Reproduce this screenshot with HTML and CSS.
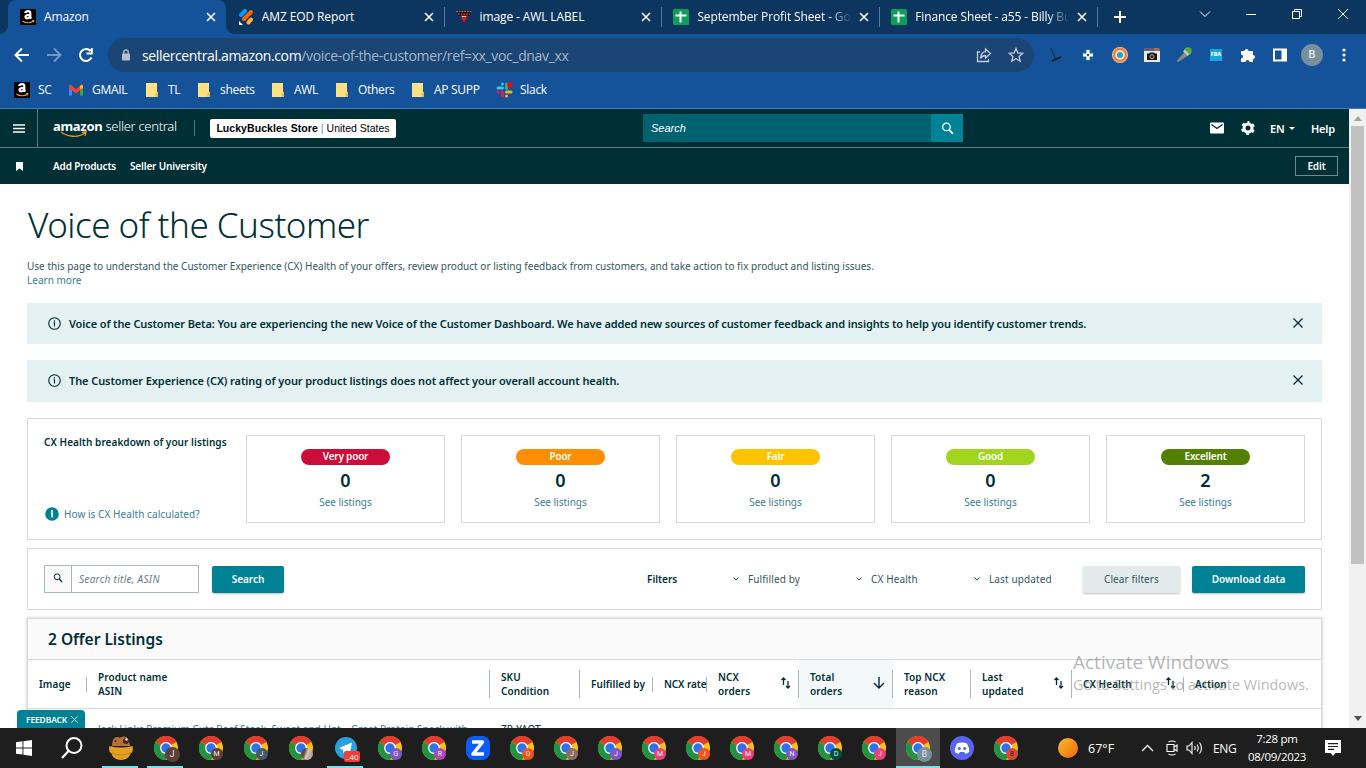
FILE: index.html
```html
<!DOCTYPE html>
<html lang="en">
<head>
  <meta charset="UTF-8" />
  <meta name="viewport" content="width=device-width, initial-scale=1" />
  <title>Voice of the Customer</title>
  <link rel="stylesheet" href="styles.css">
</head>
<body>
  <!-- Shared icons -->
  <svg class="defs" width="0" height="0">
    <symbol id="chrome" viewBox="0 0 24 24">
      <circle cx="12" cy="12" r="12" fill="#fbc116" />
      <path d="M12 12 1.6 6A12 12 0 0 1 22.4 6z" fill="#e33b2e" />
      <path d="M12 6h10.4A12 12 0 0 0 12 0z" fill="#e33b2e" />
      <path d="M1.6 6A12 12 0 0 0 12 24l5.2-9L12 12z" fill="#229342" />
      <circle cx="12" cy="12" r="6" fill="#fff" />
      <circle cx="12" cy="12" r="4.7" fill="#2d74ea" />
    </symbol>
    <symbol id="amazon" viewBox="0 0 16 16">
      <rect width="16" height="16" fill="#000" />
      <path d="M5.200 4C5.500 2.600 6.600 2.200 8 2.200s2.300.7 2.300 2v4.300l.9 1.200M10.200 5.900C7.500 5.900 5.500 6.300 5.500 8.100s3.300 1.800 4.500-.3" fill="none" stroke="#fff" stroke-width="2.200" />
      <path d="M2.500 12c3 2.300 8 2.300 10.500.3M12 11.700l1.800-.1-.4 1.700" fill="none" stroke="#f39b21" stroke-width="1.100" />
    </symbol>
    <symbol id="sheet" viewBox="0 0 16 16">
      <rect width="16" height="16" rx="1.500" fill="#0f9d58" />
      <path d="M2.500 6.500h11M7.500 2.500v11" stroke="#fff" stroke-width="2" />
    </symbol>
    <symbol id="x" viewBox="0 0 10 10">
      <path d="M1 1l8 8M9 1l-8 8" fill="none" stroke="currentColor" stroke-width="1.600" />
    </symbol>
    <symbol id="x-thin" viewBox="0 0 10 10">
      <path d="M.5.5l9 9M9.500.5l-9 9" fill="none" stroke="currentColor" stroke-width="1.300" />
    </symbol>
    <symbol id="folder" viewBox="0 0 12 14">
      <path d="M0 0h11v9h1v5H0z" fill="#ffe082" />
      <path d="M9.500 14V10.500L12 9v5z" fill="#e8bf4a" />
    </symbol>
    <symbol id="lens" viewBox="0 0 12 12">
      <circle cx="5" cy="4.500" r="3.500" fill="none" stroke="currentColor" stroke-width="1.200" />
      <path d="M7.500 7.200l3.500 3.800" stroke="currentColor" stroke-width="1.600" />
    </symbol>
    <symbol id="info" viewBox="0 0 14 14">
      <circle cx="7" cy="7" r="6.200" fill="none" stroke="currentColor" stroke-width="1.200" />
      <path d="M7 3.500v1.500M6 6.300h1v4" fill="none" stroke="currentColor" stroke-width="1.200" />
    </symbol>
    <symbol id="sort" viewBox="0 0 10 12">
      <path d="M2.500 8V1M.5 3l2-2 2 2M7 4v7M5 9l2 2 2-2" fill="none" stroke="currentColor" stroke-width="1.300" />
    </symbol>
    <symbol id="chevron" viewBox="0 0 6 4">
      <path d="M.5.5L3 3 5.500.5" fill="none" stroke="currentColor" stroke-width="1" />
    </symbol>
  </svg>

  <!-- Browser tabs -->
  <div class="tabs">
    <div class="tab active"><svg class="fav"><use href="#amazon" /></svg><span>Amazon</span><svg class="close"><use href="#x" /></svg></div>
    <div class="tab">
      <svg class="fav" viewBox="0 0 16 16">
        <g stroke-width="4" stroke-linecap="round"><path d="M3 6l4-4" stroke="#0099ff" /><path d="M6 10l7-7" stroke="#ff6100" /><path d="M10.500 13.500l2.500-3" stroke="#ffb629" /></g>
        <path d="M1 12l4 4H1z" fill="#fff" />
      </svg><span>AMZ EOD Report</span><svg class="close"><use href="#x" /></svg>
    </div>
    <div class="tab line">
      <svg class="fav" viewBox="0 0 16 16">
        <path d="M1 2h14l-1.500 5h-11z" fill="#1b1015" /><path d="M0 2.500h16M2 5h12" stroke="#b8604a" stroke-dasharray="2 .7" /><path d="M4 6.500h8l-4 7.500z" fill="#f40b0b" /><path d="M6 7.500h4" stroke="#fff" />
      </svg><span>image - AWL LABEL</span><svg class="close"><use href="#x" /></svg>
    </div>
    <div class="tab line"><svg class="fav"><use href="#sheet" /></svg><span class="fade">September Profit Sheet - Google</span><svg class="close"><use href="#x" /></svg></div>
    <div class="tab line"><svg class="fav"><use href="#sheet" /></svg><span class="fade">Finance Sheet - a55 - Billy Buckles</span><svg class="close"><use href="#x" /></svg></div>
    <div class="new-tab"><svg width="12" height="12" viewBox="0 0 12 12"><path d="M6 0v12M0 6h12" stroke="#fff" stroke-width="2" /></svg></div>
    <div class="window-controls">
      <svg viewBox="0 0 12 12"><path d="M1 3.500l5 5 5-5" /></svg>
      <svg viewBox="0 0 12 12"><path d="M1 6.500h10" /></svg>
      <svg viewBox="0 0 12 12"><path d="M1.500 3.500h7v7h-7zM3.500 3.500v-2h7v7h-2" /></svg>
      <svg viewBox="0 0 12 12"><path d="M1 1l10 10M11 1L1 11" /></svg>
    </div>
  </div>

  <!-- Toolbar -->
  <div class="toolbar">
    <div class="nav-buttons">
      <svg viewBox="0 0 16 16"><path d="M15 8H2M8 1.500L1.500 8 8 14.500" /></svg>
      <svg class="dim" viewBox="0 0 16 16"><path d="M1 8h13M8 1.500L14.500 8 8 14.500" /></svg>
      <svg viewBox="0 0 16 16"><path d="M13.500 10.500A6 6 0 1 1 12.500 4M13.800 1v5.500H8.500" /></svg>
    </div>
    <div class="omnibox">
      <svg width="10" height="12" viewBox="0 0 10 12"><rect x="1" y="4.500" width="8" height="7" rx="1" fill="#b9c0c9" /><path d="M2.800 5V3a2.200 2.200 0 0 1 4.400 0v2" fill="none" stroke="#b9c0c9" stroke-width="1.300" /></svg>
      <span class="url">sellercentral.amazon.com<i>/voice-of-the-customer/ref=xx_voc_dnav_xx</i></span>
      <svg class="omni-icon" viewBox="0 0 16 16"><path d="M4 5H1.500v9.500h11V12M9.500 2l5 4.500-5 4.500V8.500C7 8.500 5.500 9.500 4.500 11.500 4.800 7.500 6.500 5 9.500 4.700z" /></svg>
      <svg class="omni-icon" viewBox="0 0 16 16"><path d="M8 1.500l1.900 4.400 4.800.4-3.600 3.200 1.100 4.700L8 11.700l-4.200 2.500 1.100-4.700L1.300 6.300l4.800-.4z" /></svg>
    </div>
    <div class="extensions">
      <svg viewBox="0 0 16 16"><path d="M3 1l5 12" fill="none" stroke="#10243c" /><path d="M4 14l9-4" fill="none" stroke="#0a1422" stroke-width="1.800" /></svg>
      <svg viewBox="0 0 16 16"><circle cx="8" cy="8" r="6.500" fill="#17648f" /><path d="M8 3v10M3 8h10" stroke="#fff" stroke-width="3.200" /><circle cx="8" cy="8" r="1.300" fill="#17648f" /></svg>
      <svg viewBox="0 0 16 16"><circle cx="8" cy="8" r="8" fill="#f8cba5" /><circle cx="8" cy="8" r="6" fill="none" stroke="#f0803c" stroke-width="2.500" /><circle cx="8" cy="8" r="4.700" fill="#f8dcc4" /><circle cx="8" cy="8" r="3" fill="#1ba1dc" /></svg>
      <svg viewBox="0 0 16 16"><path d="M0 1h16v14H0z" fill="#e9e9ea" /><path d="M0 1h16v3H0z" fill="#5b5f78" /><path d="M10 1h5v3h-5z" fill="#b36a5b" /><path d="M3 6.500h2l1-1h4l1 1h2V13H3z" fill="#161616" /><circle cx="8" cy="9.700" r="2" fill="none" stroke="#bbb" /></svg>
      <svg viewBox="0 0 16 16"><path d="M1.500 14.500L9 6l2 2z" fill="#999" stroke="#888" stroke-width="2" /><circle cx="12" cy="4" r="3.800" fill="#4faf35" /><path d="M8 3.500l4.500 4.500" stroke="#c4c4c4" stroke-width="2.500" /></svg>
      <span class="fba">FBA</span>
      <svg viewBox="0 0 16 16"><path d="M1 4h3.500a2 2 0 1 1 4 0H13v4a2 2 0 1 1 0 4v3H9.500a2 2 0 0 0-4 0H1v-3.500a2 2 0 0 0 0-4z" fill="#fff" /></svg>
      <svg viewBox="0 0 16 16"><path d="M2 2.500h12v11H2z" fill="none" stroke="#fff" stroke-width="2" /><path d="M9.500 2h5v12h-5z" fill="#fff" /></svg>
      <span class="avatar">B</span>
      <svg viewBox="0 0 16 16"><g fill="#fff"><circle cx="8" cy="3" r="1.600" /><circle cx="8" cy="8" r="1.600" /><circle cx="8" cy="13" r="1.600" /></g></svg>
    </div>
  </div>

  <!-- Bookmarks -->
  <div class="bookmarks">
    <div class="bookmark"><svg width="16" height="16"><use href="#amazon" /></svg>SC</div>
    <div class="bookmark"><svg width="16" height="12" viewBox="0 0 16 12"><path d="M1 1.500v10h3V5z" fill="#4285f4" /><path d="M15 1.500v10h-3V5z" fill="#34a853" /><path d="M1 1.500v3L8 9.500l7-5v-3L13.500.5 8 5 2.500.5z" fill="#ea4335" /><path d="M12 2v3.500l3-1.500V1.500L13.500.5z" fill="#fbbc04" /></svg>GMAIL</div>
    <div class="bookmark"><svg width="12" height="14"><use href="#folder" /></svg>TL</div>
    <div class="bookmark"><svg width="12" height="14"><use href="#folder" /></svg>sheets</div>
    <div class="bookmark"><svg width="12" height="14"><use href="#folder" /></svg>AWL</div>
    <div class="bookmark"><svg width="12" height="14"><use href="#folder" /></svg>Others</div>
    <div class="bookmark"><svg width="12" height="14"><use href="#folder" /></svg>AP SUPP</div>
    <div class="bookmark">
      <svg width="17" height="16" viewBox="0 0 17 16"><g stroke-width="3" stroke-linecap="round"><path d="M6.500 2v.1M2 6h4.500" stroke="#36c5f0" /><path d="M10.500 2v4.500" stroke="#2eb67d" /><path d="M10.500 10H15M10.500 14v.1" stroke="#ecb22e" /><path d="M2 10h.1M6.500 10v4" stroke="#e01e5a" /></g><circle cx="14" cy="3" r="2.800" fill="#f00" /></svg>Slack
    </div>
  </div>

  <div class="viewport">
    <div class="page">
      <header>
        <div class="top-bar">
          <div class="burger"><svg width="12" height="9" viewBox="0 0 12 9"><path d="M0 1h12M0 4.500h12M0 8h12" stroke="#fff" stroke-width="1.300" /></svg></div>
          <div class="logo">
            <b>amazon</b> <span>seller central</span>
            <svg class="smile" width="28" height="7" viewBox="0 0 28 7"><path d="M1 1c7 5 17 6 24 1M22 1.500l4-.7-.8 4" fill="none" stroke="#f39b21" stroke-width="1.300" /></svg>
          </div>
          <div class="store"><b>LuckyBuckles Store</b><em>|</em><span>United States</span></div>
          <div class="site-search"><span>Search</span><div><svg width="13" height="13"><use href="#lens" /></svg></div></div>
          <div class="top-links">
            <svg width="14" height="12" viewBox="0 0 14 12"><rect y=".5" width="14" height="11" rx="1" fill="#fff" /><path d="M1.500 2.500L7 6.500l5.500-4" fill="none" stroke="#002f36" stroke-width="1.400" /></svg>
            <svg class="gear" width="14" height="14" viewBox="0 0 14 14"><circle cx="7" cy="7" r="4" fill="none" stroke="#fff" stroke-width="3" /><circle cx="7" cy="7" r="5.800" fill="none" stroke="#fff" stroke-width="2.200" stroke-dasharray="3.040 3.040" stroke-dashoffset="1.520" transform="rotate(-90 7 7)" /></svg>
            <span class="lang">EN</span>
            <svg class="caret" width="6" height="3" viewBox="0 0 6 3"><path d="M0 0h6L3 3z" fill="#fff" /></svg>
            <span class="help">Help</span>
          </div>
        </div>
        <div class="sub-bar">
          <svg width="7" height="9" viewBox="0 0 7 9"><path d="M0 0h7v9L3.500 6.500 0 9z" fill="#fff" /></svg>
          <span class="add">Add Products</span>
          <span class="uni">Seller University</span>
          <span class="edit">Edit</span>
        </div>
      </header>

      <main>
        <h1>Voice of the Customer</h1>
        <p class="intro"><span>Use this page to understand the Customer Experience (CX) Health of your offers, review product or listing feedback from customers, and take action to fix product and listing issues.</span><br /><a>Learn more</a></p>

        <div class="notice"><svg class="i"><use href="#info" /></svg><span>Voice of the Customer Beta: You are experiencing the new Voice of the Customer Dashboard. We have added new sources of customer feedback and insights to help you identify customer trends.</span><svg class="dismiss"><use href="#x-thin" /></svg></div>
        <div class="notice second"><svg class="i"><use href="#info" /></svg><span>The Customer Experience (CX) rating of your product listings does not affect your overall account health.</span><svg class="dismiss"><use href="#x-thin" /></svg></div>

        <section class="health">
          <div class="health-side">
            <h2>CX Health breakdown of your listings</h2>
            <a><svg width="14" height="14" viewBox="0 0 14 14"><circle cx="7" cy="7" r="6.800" fill="#008296" /><path d="M7 3v2M6 6.200h1.200v4.300" fill="none" stroke="#fff" stroke-width="1.700" /></svg><span>How is CX Health calculated?</span></a>
          </div>
          <div class="score"><span class="pill very-poor">Very poor</span><strong>0</strong><a>See listings</a></div>
          <div class="score"><span class="pill poor">Poor</span><strong>0</strong><a>See listings</a></div>
          <div class="score"><span class="pill fair">Fair</span><strong>0</strong><a>See listings</a></div>
          <div class="score"><span class="pill good">Good</span><strong>0</strong><a>See listings</a></div>
          <div class="score"><span class="pill excellent">Excellent</span><strong>2</strong><a>See listings</a></div>
        </section>

        <section class="filters">
          <div class="field"><div><svg width="10" height="10"><use href="#lens" /></svg></div><span>Search title, ASIN</span></div>
          <div class="btn primary search-btn">Search</div>
          <b class="filters-label">Filters</b>
          <div class="filter f1"><svg><use href="#chevron" /></svg>Fulfilled by</div>
          <div class="filter f2"><svg><use href="#chevron" /></svg>CX Health</div>
          <div class="filter f3"><svg><use href="#chevron" /></svg>Last updated</div>
          <div class="btn clear">Clear filters</div>
          <div class="btn primary download">Download data</div>
        </section>

        <section class="listings">
          <h3>2 Offer Listings</h3>
          <div class="row head">
            <div class="short">Image</div>
            <div>Product name<br />ASIN</div>
            <div>SKU<br />Condition</div>
            <div class="short">Fulfilled by</div>
            <div class="short rate">NCX rate</div>
            <div>NCX<br />orders<svg class="sort"><use href="#sort" /></svg></div>
            <div class="sorted">Total<br />orders<svg class="sort down" viewBox="0 0 12 12"><path d="M6 0v11M1 6l5 5 5-5" fill="none" stroke="currentColor" stroke-width="1.400" /></svg></div>
            <div>Top NCX<br />reason</div>
            <div>Last<br />updated<svg class="sort"><use href="#sort" /></svg></div>
            <div class="short">CX Health<svg class="sort"><use href="#sort" /></svg></div>
            <div>Action</div>
          </div>
          <div class="row item">
            <div></div>
            <div><a>Jack Links Premium Cuts Beef Steak, Sweet and Hot – Great Protein Snack with</a></div>
            <div>ZP-YAOT</div>
          </div>
        </section>
      </main>
      <div class="feedback">FEEDBACK<svg width="7" height="7"><use href="#x-thin" /></svg></div>
    </div>
    <div class="scrollbar">
      <svg width="8" height="5" viewBox="0 0 8 5"><path d="M0 5h8L4 0z" fill="#a3a3a3" /></svg>
      <div class="thumb"></div>
      <svg width="8" height="5" viewBox="0 0 8 5"><path d="M0 0h8L4 5z" fill="#505050" /></svg>
    </div>
    <div class="watermark"><p class="w1">Activate Windows</p><p class="w2">Go to Settings to activate Windows.</p></div>
  </div>

  <!-- Taskbar -->
  <div class="taskbar">
    <div class="task start"><svg width="16" height="16" viewBox="0 0 16 16"><path d="M0 2.200l6.500-.9v6.200H0zM7.400 1.200L16 0v7.500H7.400zM0 8.400h6.500v6.200L0 13.700zM7.400 8.400H16V16l-8.600-1.200z" fill="#fff" /></svg></div>
    <div class="task find"><svg width="22" height="22" viewBox="0 0 22 22"><circle cx="13" cy="8.500" r="7.500" fill="none" stroke="#fff" stroke-width="2" /><path d="M7.500 14L1 21" stroke="#fff" stroke-width="2.200" /></svg></div>
    <div class="task wide open"><svg width="24" height="24" viewBox="0 0 24 24"><path d="M3 10Q3 1 8 1q3 1 6-.5Q20-.5 21 10z" fill="#b5713a" /><circle cx="17" cy="5" r="3" fill="#43261e" /><circle cx="17.500" cy="3.500" r="1.200" fill="#fff" /><circle cx="6.500" cy="5" r="1" fill="#43261e" /><path d="M.5 10q11.500 3 23 0 1.500 6-2 7.500Q20 24 12 24t-9.500-6.500Q-1 16 .5 10z" fill="#e5a023" /><path d="M2.500 17q9.500 4 19 0" fill="none" stroke="#c98218" /></svg></div>
    <div class="task wide open"><svg width="24" height="24"><use href="#chrome" /></svg><i class="badge brown big">J</i></div>
    <div class="task wide"><svg width="24" height="24"><use href="#chrome" /></svg><i class="badge brown">M</i></div>
    <div class="task wide"><svg width="24" height="24"><use href="#chrome" /></svg><i class="badge slate">J</i></div>
    <div class="task wide"><svg width="24" height="24"><use href="#chrome" /></svg><i class="badge photo"></i></div>
    <div class="task wide open"><svg width="22" height="22" viewBox="0 0 22 22"><circle cx="11" cy="11" r="11" fill="#2ca0dc" /><path d="M4 11l13-5.500-2.500 12-4-3-2 2-.5-3.500z" fill="#fff" /></svg><i class="count">..40</i></div>
    <div class="task"><svg width="24" height="24"><use href="#chrome" /></svg><i class="badge violet">G</i></div>
    <div class="task"><svg width="24" height="24"><use href="#chrome" /></svg><i class="badge purple">R</i></div>
    <div class="task"><svg width="24" height="24" viewBox="0 0 24 24"><rect width="24" height="24" rx="8" fill="#0b5cff" /><path d="M6 6h10.500L7 18h11" fill="none" stroke="#fff" stroke-width="3.600" stroke-linejoin="round" /></svg></div>
    <div class="task"><svg width="24" height="24"><use href="#chrome" /></svg><i class="badge orange">D</i></div>
    <div class="task"><svg width="24" height="24"><use href="#chrome" /></svg><i class="badge taupe">J</i></div>
    <div class="task"><svg width="24" height="24"><use href="#chrome" /></svg><i class="badge violet">J</i></div>
    <div class="task"><svg width="24" height="24"><use href="#chrome" /></svg><i class="badge pink">M</i></div>
    <div class="task"><svg width="24" height="24"><use href="#chrome" /></svg><i class="badge orange">J</i></div>
    <div class="task"><svg width="24" height="24"><use href="#chrome" /></svg><i class="badge pink">M</i></div>
    <div class="task"><svg width="24" height="24"><use href="#chrome" /></svg><i class="badge violet">N</i></div>
    <div class="task"><svg width="24" height="24"><use href="#chrome" /></svg><i class="badge green">D</i></div>
    <div class="task"><svg width="24" height="24"><use href="#chrome" /></svg><i class="badge pink">J</i></div>
    <div class="task current"><svg width="24" height="24"><use href="#chrome" /></svg><i class="badge gray big">B</i></div>
    <div class="task"><svg width="24" height="24" viewBox="0 0 24 24"><circle cx="12" cy="12" r="12" fill="#5865f2" /><path d="M7 7.500q5-2 10 0 2.500 4 2.200 8.500-2 1.500-4 1.700l-1-1.700h-4.400l-1 1.700q-2-.2-4-1.700Q4.500 11.500 7 7.500z" fill="#fff" /><circle cx="9.300" cy="12.500" r="1.600" fill="#5865f2" /><circle cx="14.700" cy="12.500" r="1.600" fill="#5865f2" /></svg></div>
    <div class="task"><svg width="24" height="24"><use href="#chrome" /></svg><i class="badge red">8</i></div>
    <div class="tray">
      <i class="sun"></i>
      <span class="temp">67°F</span>
      <svg width="13" height="8" viewBox="0 0 13 8"><path d="M1 7l5.500-5.500L12 7" fill="none" stroke="#fff" stroke-width="1.300" /></svg>
      <svg class="meet" width="12" height="16" viewBox="0 0 12 16"><path d="M1 4.500h7v7H1zM8 7l3-2v6L8 9M2.500 2q3.500-2 7 0M2.500 14q3.500 2 7 0" fill="none" stroke="#fff" stroke-width="1.100" /></svg>
      <svg class="volume" width="17" height="14" viewBox="0 0 17 14"><path d="M1 5h2l3-3.500v11L3 9H1zM8.500 5q1.500 2 0 4M11 3.500q2.500 3.500 0 7M13.500 1.500q4 5.500 0 11" fill="none" stroke="#fff" stroke-width="1.100" /></svg>
      <span class="eng">ENG</span>
      <span class="clock">7:28 pm<br />08/09/2023</span>
      <svg class="note" width="16" height="16" viewBox="0 0 16 16"><path d="M0 0h16v13h-5.500L8 16l-2.500-3H0z" fill="#fff" /><path d="M3 3.700h10M3 6.500h10M3 9.300h6" stroke="#1e1e1e" stroke-width="1.200" /></svg>
    </div>
  </div>
</body>
</html>
```
FILE: styles.css
```css
* {
  margin: 0;
  padding: 0;
  box-sizing: border-box;
}
body {
  width: 1366px;
  height: 768px;
  overflow: hidden;
  display: flex;
  flex-direction: column;
  background: #fff;
  color: #002f36;
  font-family: "Noto Sans", "Open Sans", sans-serif;
  font-size: 10px;
}
svg {
  display: block;
  flex: none;
}
i {
  font-style: normal;
}
.defs {
  position: absolute;
}

/* browser chrome */
.tabs {
  height: 34px;
  flex: none;
  display: flex;
  padding-left: 8px;
  background: #0c3560;
  color: #fff;
  font-family: "Open Sans", sans-serif;
  font-size: 12px;
}
.tab {
  width: 217.8px;
  display: flex;
  align-items: center;
  padding: 0 10px 0 12px;
  white-space: nowrap;
  letter-spacing: -0.12px;
}
.tab.active {
  position: relative;
  background: #14529a;
  border-radius: 8px 8px 0 0;
}
.tab.active::before,
.tab.active::after {
  content: "";
  position: absolute;
  bottom: 0;
  width: 8px;
  height: 8px;
  background: radial-gradient(circle at 0 0, transparent 7.5px, #14529a 8px);
}
.tab.active::before { left: -8px; }
.tab.active::after {
  right: -8px;
  transform: scaleX(-1);
}
.tab.line {
  background: linear-gradient(#55799d, #55799d) 0 7px / 1px 20px no-repeat;
}
.tab .fav {
  width: 16px;
  height: 16px;
  margin-right: 8px;
}
.tab span {
  width: 155px;
  overflow: hidden;
  padding-bottom: 1px;
}
.fade {
  -webkit-mask-image: linear-gradient(90deg, #000 85%, transparent);
  mask-image: linear-gradient(90deg, #000 85%, transparent);
}
.close {
  width: 10px;
  height: 10px;
  margin-left: 7px;
}
.new-tab {
  width: 46px;
  display: flex;
  align-items: center;
  justify-content: center;
  background: linear-gradient(#55799d, #55799d) 0 7px / 1px 20px no-repeat;
}
.window-controls {
  display: flex;
  margin-left: auto;
}
.window-controls svg {
  width: 12px;
  height: 12px;
  margin: 8px 17px;
  fill: none;
  stroke: #fff;
}
.toolbar {
  height: 42px;
  flex: none;
  display: flex;
  align-items: center;
  background: #14529a;
}
.nav-buttons {
  display: flex;
  gap: 16px;
  width: 108px;
  padding-left: 14px;
}
.nav-buttons svg {
  width: 16px;
  height: 16px;
  fill: none;
  stroke: #fff;
  stroke-width: 2;
}
.nav-buttons .dim {
  stroke: #7397c3;
}
.omnibox {
  width: 926px;
  height: 34px;
  display: flex;
  align-items: center;
  padding: 0 10px 0 13px;
  border-radius: 17px;
  background: #1a4575;
  color: #fff;
}
.url {
  flex: 1;
  margin-left: 11px;
  font: 14px "Open Sans", sans-serif;
  letter-spacing: -0.36px;
}
.url i {
  color: #a5b5c8;
}
.omni-icon {
  width: 16px;
  height: 16px;
  margin-left: 16px;
  fill: none;
  stroke: #c3ccd7;
  stroke-width: 1.3;
}
.extensions {
  display: flex;
  align-items: center;
  margin-left: 14px;
  gap: 16px;
}
.extensions svg {
  width: 16px;
  height: 16px;
}
.fba {
  width: 12px;
  height: 12px;
  margin: 0 2px;
  background: #16a5dd;
  color: #fff;
  font-size: 5.5px;
  font-weight: 800;
  line-height: 11px;
  text-align: center;
}
.avatar {
  width: 22px;
  height: 22px;
  margin: 0 -3px;
  border-radius: 50%;
  background: #78909c;
  color: #fff;
  font: 11px/22px Roboto, sans-serif;
  text-align: center;
}
.bookmarks {
  height: 33px;
  flex: none;
  display: flex;
  align-items: center;
  padding: 0 0 5px 14px;
  background: #14529a;
  border-bottom: 1px solid #4379b8;
  color: #fff;
  font-family: "Open Sans", sans-serif;
  font-size: 12px;
  letter-spacing: -0.3px;
}
.bookmark {
  width: 54px;
  display: flex;
  align-items: center;
  gap: 8px;
  white-space: nowrap;
}
.bookmark:nth-child(n+3) { gap: 10px; }
.bookmark:nth-child(2) { width: 78px; }
.bookmark:nth-child(3) { width: 52px; }
.bookmark:nth-child(4) { width: 74px; }
.bookmark:nth-child(5) { width: 64px; }
.bookmark:nth-child(6) { width: 76px; }
.bookmark:nth-child(7) { width: 84px; }
.bookmark:nth-child(8) { gap: 7px; }

/* page */
.viewport {
  position: relative;
  height: 619px;
  flex: none;
  display: flex;
  overflow: hidden;
}
.page {
  position: relative;
  width: 1349px;
  height: 619px;
  overflow: hidden;
}
header {
  background: #002f36;
  color: #fff;
}
.top-bar {
  height: 39px;
  display: flex;
  align-items: center;
  border-bottom: 1px solid #5f7b7f;
}
.burger {
  width: 38px;
  height: 38px;
  display: flex;
  align-items: center;
  padding-left: 13px;
  border-right: 1px solid #5f7b7f;
}
.logo {
  position: relative;
  width: 142px;
  height: 16px;
  margin: 0 15px;
  border-right: 1px solid #5f7b7f;
  font-size: 13px;
  line-height: 13px;
  white-space: nowrap;
  letter-spacing: -0.3px;
}
.logo span {
  font-weight: 300;
}
.smile {
  position: absolute;
  left: 7px;
  top: 11px;
}
.store {
  width: 186px;
  height: 19px;
  display: flex;
  align-items: center;
  justify-content: center;
  border-radius: 2px;
  background: #fff;
  color: #000;
  font-family: "Liberation Sans", Arial, sans-serif;
  font-size: 10.5px;
  white-space: nowrap;
}
.store b {
  letter-spacing: 0.06px;
}
.store em {
  margin: 0 3px;
  color: #5da0d0;
  font-style: normal;
}
.site-search {
  width: 320px;
  height: 28px;
  display: flex;
  align-items: center;
  margin-left: 247px;
  padding-left: 8px;
  background: #00626f;
  font: italic 11px "Liberation Sans", sans-serif;
}
.site-search div {
  width: 32px;
  height: 28px;
  margin-left: auto;
  padding: 8px 10px;
  background: #008296;
}
.top-links {
  display: flex;
  align-items: center;
  margin-left: 247px;
  font-size: 11px;
  font-weight: 600;
  letter-spacing: -0.2px;
}
.gear {
  margin-left: 17px;
}
.lang {
  width: 16px;
  margin-left: 15px;
}
.caret {
  margin-left: 3px;
}
.help {
  margin-left: 16px;
}
.sub-bar {
  height: 36px;
  display: flex;
  align-items: center;
  padding: 0 11px 0 16px;
  font-weight: 600;
  letter-spacing: -0.15px;
}
.add {
  width: 77px;
  margin-left: 30px;
  white-space: nowrap;
}
.edit {
  width: 43px;
  height: 20px;
  margin-left: auto;
  border: 1px solid #708a8d;
  line-height: 19px;
  text-align: center;
}
main {
  padding: 0 27px;
}
h1 {
  height: 75px;
  padding: 16px 0 0 1px;
  font-size: 35px;
  font-weight: 300;
  line-height: 50px;
  white-space: nowrap;
  letter-spacing: -0.5px;
}
.intro {
  height: 44px;
  line-height: 14px;
  white-space: nowrap;
  color: #33565c;
  letter-spacing: 0.01px;
}
a {
  color: #3a7d96;
}
.notice {
  height: 41px;
  display: flex;
  align-items: center;
  margin-bottom: 16px;
  padding: 0 19px 1px 21px;
  background: #e3f1f2;
  font-size: 11px;
  font-weight: 600;
  white-space: nowrap;
  letter-spacing: -0.12px;
}
.notice.second {
  height: 42px;
  padding-bottom: 2px;
  letter-spacing: -0.09px;
}
.i {
  width: 13px;
  height: 13px;
  margin-right: 8px;
}
.dismiss {
  width: 10px;
  height: 10px;
  margin-left: auto;
}
.health {
  height: 122px;
  display: flex;
  gap: 16px;
  padding: 16px;
  border: 1px solid #d5dbdb;
}
.health-side {
  width: 186px;
  height: 88px;
  display: flex;
  flex-direction: column;
  justify-content: space-between;
  padding-bottom: 2px;
  white-space: nowrap;
  letter-spacing: 0.06px;
}
.health-side h2 {
  font-size: 10px;
  font-weight: 600;
}
.health-side a {
  display: flex;
  align-items: center;
  gap: 5px;
  padding-left: 1px;
}
.score {
  width: 199px;
  height: 88px;
  display: flex;
  flex-direction: column;
  align-items: center;
  padding-top: 13px;
  border: 1px solid #d5dbdb;
}
.pill {
  width: 89px;
  height: 16px;
  border-radius: 8px;
  color: #fff;
  font-weight: 600;
  line-height: 15px;
  text-align: center;
  letter-spacing: -0.2px;
}
.very-poor { background: #cc0c39; }
.poor { background: #ff8f00; }
.fair { background: #ffc400; }
.good { background: #a2d61e; }
.excellent { background: #538000; }
.score strong {
  margin-top: 2px;
  font-size: 18px;
  font-weight: 600;
  line-height: 26px;
}
.score a {
  margin-top: 2px;
  line-height: 14px;
}
.filters {
  height: 62px;
  display: flex;
  align-items: center;
  margin-top: 8px;
  padding-left: 16px;
  border: 1px solid #d5dbdb;
  white-space: nowrap;
}
.field {
  width: 155px;
  height: 28px;
  display: flex;
  align-items: center;
  border: 1px solid #aab7b8;
  color: #6a7c80;
  font-style: italic;
  letter-spacing: 0.3px;
}
.field div {
  width: 27px;
  height: 26px;
  margin-right: 7px;
  padding: 7px 8px;
  border-right: 1px solid #aab7b8;
  background: #fafafa;
  color: #002f36;
}
.btn {
  height: 27px;
  line-height: 27px;
  border-radius: 2px;
  text-align: center;
  box-shadow: 0 1px 2px rgba(0, 0, 0, 0.25);
}
.primary {
  background: #008296;
  color: #fff;
  font-weight: 600;
}
.search-btn {
  width: 72px;
  margin-left: 13px;
}
.filters-label {
  width: 86px;
  margin-left: 363px;
  padding-bottom: 1px;
  font-weight: 600;
}
.filter {
  display: flex;
  align-items: center;
  gap: 9px;
  color: #33565c;
  letter-spacing: 0.12px;
}
.filter svg {
  width: 6px;
  height: 4px;
}
.f1 { width: 123px; }
.f2 { width: 118px; }
.f3 { width: 109px; }
.clear {
  width: 97px;
  background: #e2eaeb;
  color: #33565c;
  letter-spacing: 0.1px;
}
.download {
  width: 113px;
  margin-left: 12px;
}
.listings {
  margin-top: 8px;
  height: 200px;
  border: 1px solid #d5dbdb;
  box-shadow: 0 0 3px rgba(0, 0, 0, 0.25);
}
h3 {
  height: 41px;
  padding-left: 20px;
  border-bottom: 1px solid #d5dbdb;
  background: #fafafa;
  font-size: 15.5px;
  font-weight: 600;
  line-height: 41px;
}
.row {
  display: grid;
  grid-template-columns: 59px 403px 90px 73px 54px 92px 94px 78px 101px 112px auto;
}
.head {
  height: 49px;
  border-bottom: 1px solid #d5dbdb;
  font-weight: 600;
  line-height: 14px;
  letter-spacing: 0.08px;
}
.head div {
  position: relative;
  align-content: center;
  padding-left: 11px;
  white-space: nowrap;
  background: linear-gradient(#aab7b8, #aab7b8) 100% 50% / 1px 28px no-repeat;
}
.head .short {
  background-size: 1px 15px;
}
.head .rate {
  letter-spacing: -0.1px;
}
.head div:last-child {
  background: none;
}
.head .sorted {
  background-color: #f3f8f9;
}
.sort {
  position: absolute;
  right: 8px;
  top: 17px;
  width: 10px;
  height: 12px;
}
.sort.down {
  width: 12px;
}
.item {
  padding-top: 13px;
  white-space: nowrap;
  letter-spacing: 0.05px;
}
.item div {
  padding-left: 11px;
}
.feedback {
  position: absolute;
  left: 17px;
  bottom: 0;
  width: 68px;
  height: 18px;
  display: flex;
  align-items: center;
  gap: 4px;
  padding-left: 9px;
  border-radius: 4px 4px 0 0;
  background: #008296;
  color: #fff;
  font-size: 8.5px;
  font-weight: 600;
  letter-spacing: -0.15px;
}
.scrollbar {
  width: 17px;
  height: 619px;
  display: flex;
  flex-direction: column;
  align-items: center;
  padding: 7px 0;
  background: #f1f1f1;
}
.thumb {
  width: 13px;
  height: 438px;
  margin: 5px 0 auto;
  background: #c1c1c1;
}
.watermark {
  position: absolute;
  left: 1073px;
  top: 540px;
  color: rgba(120, 120, 120, 0.55);
  font-family: "Open Sans", sans-serif;
  white-space: nowrap;
}
.w1 {
  font-size: 19px;
  line-height: 26px;
}
.w2 {
  font-size: 14.4px;
  line-height: 20px;
}

/* taskbar */
.taskbar {
  height: 40px;
  flex: none;
  display: flex;
  background: #1e1e1e;
  color: #fff;
}
.task {
  position: relative;
  width: 44px;
  flex: none;
  display: flex;
  align-items: center;
  justify-content: center;
}
.start { width: 48px; }
.find {
  width: 50px;
  padding-right: 2px;
}
.wide { width: 45px; }
.open::after,
.current::after {
  content: "";
  position: absolute;
  left: 4px;
  right: 5px;
  bottom: 0;
  height: 2px;
  background: #83dfe6;
}
.current {
  background: #4b4c4b;
}
.current::after {
  left: 0;
  right: 0;
}
.badge {
  position: absolute;
  left: 50%;
  top: 50%;
  width: 12px;
  height: 12px;
  border-radius: 50%;
  font: 7px/12px Roboto, sans-serif;
  text-align: center;
  color: #eee;
}
.badge.big {
  width: 15px;
  height: 15px;
  margin: -1px 0 0 -1px;
  font-size: 8.5px;
  line-height: 15px;
}
.brown { background: #5d4037; }
.slate { background: #455a64; }
.violet { background: #7e57c2; }
.purple { background: #ab47bc; }
.orange { background: #f4511e; }
.taupe { background: #8d6e63; }
.pink { background: #ec407a; }
.green { background: #004d40; }
.gray { background: #78909c; }
.red { background: #d84a38; color: #301010; }
.photo { background: linear-gradient(110deg, #5a4a40 30%, #dcc5bd 50%, #a98479); }
.count {
  position: absolute;
  left: 21px;
  top: 23px;
  width: 16px;
  height: 11px;
  border-radius: 2px;
  background: #f23c34;
  font: 8px/11px "Open Sans", sans-serif;
  letter-spacing: -0.2px;
  text-align: center;
}
.tray {
  flex: 1;
  display: flex;
  align-items: center;
  padding-left: 30px;
  font-family: "Open Sans", sans-serif;
  font-size: 12px;
  letter-spacing: -0.3px;
}
.sun {
  width: 20px;
  height: 20px;
  border-radius: 50%;
  background: linear-gradient(135deg, #f8bd32, #f06a0a);
}
.temp {
  width: 53px;
  margin-left: 10px;
  font-size: 12.5px;
  letter-spacing: 0;
}
.meet { margin-left: 12px; }
.volume { margin-left: 8px; }
.eng {
  width: 24px;
  margin-left: 10px;
}
.clock {
  width: 62px;
  margin-left: 9px;
  line-height: 18px;
  font-size: 11.5px;
  text-align: center;
}
.note {
  margin-left: 17px;
}
```
